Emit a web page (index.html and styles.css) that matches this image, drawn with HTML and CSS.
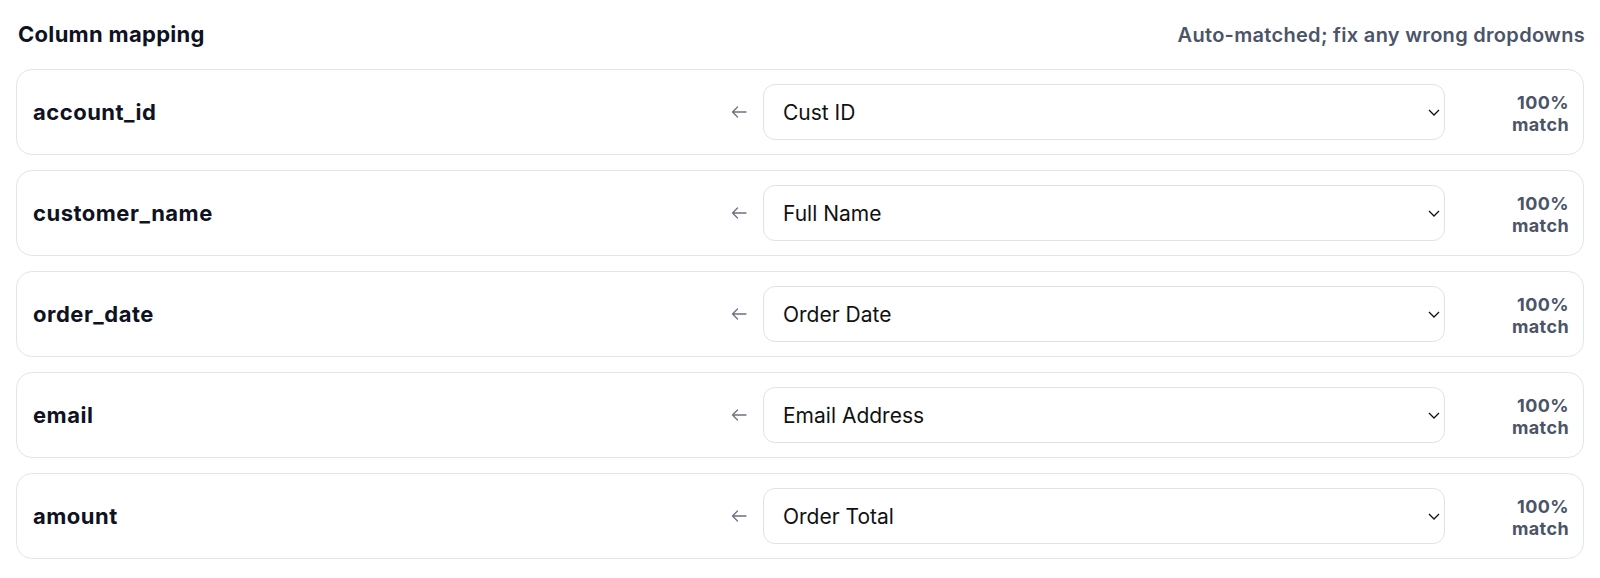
FILE: index.html
```html
<!DOCTYPE html>
<html lang="en">
<head>
    <meta charset="UTF-8">
    <meta name="viewport" content="width=device-width, initial-scale=1.0">
    <title>Column mapping</title>
    <link rel="stylesheet" href="styles.css">
</head>
<body>
    <div class="header">
        <h2>Column mapping</h2>
        <span class="hint">Auto-matched; fix any wrong dropdowns</span>
    </div>

    <div class="rows">
        <div class="row">
            <div class="field">account_id</div>
            <svg class="arrow" width="16" height="12" viewBox="0 0 16 12"><path d="M15 6H1.5M6.5 1L1.5 6l5 5" fill="none" stroke="#6b7280" stroke-width="1.3" stroke-linecap="round" stroke-linejoin="round"/></svg>
            <div class="pick">
                <select><option>Cust ID</option></select>
                <svg class="chev" width="12" height="7" viewBox="0 0 12 7"><path d="M1 1l5 5 5-5" fill="none" stroke="#111" stroke-width="1.3"/></svg>
            </div>
            <div class="score">100%<br>match</div>
        </div>
        <div class="row">
            <div class="field">customer_name</div>
            <svg class="arrow" width="16" height="12" viewBox="0 0 16 12"><path d="M15 6H1.5M6.5 1L1.5 6l5 5" fill="none" stroke="#6b7280" stroke-width="1.3" stroke-linecap="round" stroke-linejoin="round"/></svg>
            <div class="pick">
                <select><option>Full Name</option></select>
                <svg class="chev" width="12" height="7" viewBox="0 0 12 7"><path d="M1 1l5 5 5-5" fill="none" stroke="#111" stroke-width="1.3"/></svg>
            </div>
            <div class="score">100%<br>match</div>
        </div>
        <div class="row">
            <div class="field">order_date</div>
            <svg class="arrow" width="16" height="12" viewBox="0 0 16 12"><path d="M15 6H1.5M6.5 1L1.5 6l5 5" fill="none" stroke="#6b7280" stroke-width="1.3" stroke-linecap="round" stroke-linejoin="round"/></svg>
            <div class="pick">
                <select><option>Order Date</option></select>
                <svg class="chev" width="12" height="7" viewBox="0 0 12 7"><path d="M1 1l5 5 5-5" fill="none" stroke="#111" stroke-width="1.3"/></svg>
            </div>
            <div class="score">100%<br>match</div>
        </div>
        <div class="row">
            <div class="field">email</div>
            <svg class="arrow" width="16" height="12" viewBox="0 0 16 12"><path d="M15 6H1.5M6.5 1L1.5 6l5 5" fill="none" stroke="#6b7280" stroke-width="1.3" stroke-linecap="round" stroke-linejoin="round"/></svg>
            <div class="pick">
                <select><option>Email Address</option></select>
                <svg class="chev" width="12" height="7" viewBox="0 0 12 7"><path d="M1 1l5 5 5-5" fill="none" stroke="#111" stroke-width="1.3"/></svg>
            </div>
            <div class="score">100%<br>match</div>
        </div>
        <div class="row">
            <div class="field">amount</div>
            <svg class="arrow" width="16" height="12" viewBox="0 0 16 12"><path d="M15 6H1.5M6.5 1L1.5 6l5 5" fill="none" stroke="#6b7280" stroke-width="1.3" stroke-linecap="round" stroke-linejoin="round"/></svg>
            <div class="pick">
                <select><option>Order Total</option></select>
                <svg class="chev" width="12" height="7" viewBox="0 0 12 7"><path d="M1 1l5 5 5-5" fill="none" stroke="#111" stroke-width="1.3"/></svg>
            </div>
            <div class="score">100%<br>match</div>
        </div>
    </div>
</body>
</html>
```

FILE: styles.css
```css
body {font-family: Inter, "Noto Sans", sans-serif; background: #fff; color: #0f1222; margin: 0; padding: 20px 16px 16px;}
.header {display: flex; justify-content: space-between; align-items: baseline; margin-bottom: 21px; padding: 0 0 0 2px;}
.header h2 {margin: 0; font-size: 22px; line-height: 28px; font-weight: 700; letter-spacing: 0.3px;}
.hint {font-size: 20px; font-weight: 600; color: #4b5468; letter-spacing: 0.3px; margin-right: -1px;}
.rows {display: flex; flex-direction: column; gap: 15px;}
.row {display: grid; grid-template-columns: 1fr 16px 1fr 108px; gap: 16px; align-items: center; background: #fff; border: 1px solid #e2e5ed; border-radius: 16px; padding: 14px 14px 14px 16px;}
.field {font-size: 22px; font-weight: 700; letter-spacing: 0.5px;}
.pick {position: relative;}
.pick select {appearance: none; -webkit-appearance: none; width: 100%; height: 56px; border: 1px solid #dfe2ea; border-radius: 12px; background: #fff; padding: 0 19px; font-family: inherit; font-size: 21px; color: #111;}
.chev {position: absolute; right: 5px; top: 25px;}
.score {text-align: right; font-size: 18px; line-height: 22px; font-weight: 700; color: #4b5468; letter-spacing: 0.4px; padding-top: 3px;}
```
